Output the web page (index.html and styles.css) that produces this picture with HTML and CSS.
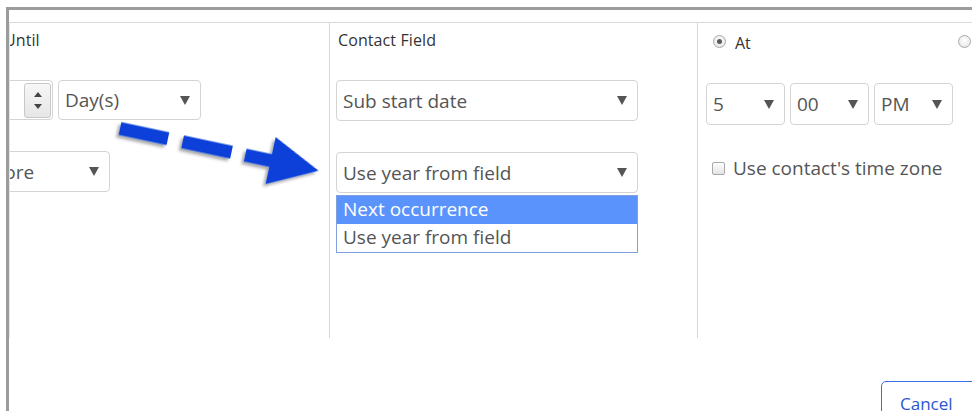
FILE: index.html
```html
<!DOCTYPE html>
<html lang="en">
<head>
<meta charset="utf-8">
<title>Timer step</title>
<link rel="stylesheet" href="styles.css">
</head>
<body>
<div class="frame">
  <div class="panel">
    <div class="cols">
      <section class="col col-until">
        <div class="label label-until">Until</div>
        <div class="row row-first">
          <div class="num-input">
            <span class="num-value">1</span>
            <span class="spinner"><span class="tri-up"></span><span class="tri-down"></span></span>
          </div>
          <div class="select select-unit"><span class="select-text">Day(s)</span><span class="caret"></span></div>
        </div>
        <div class="row row-second">
          <div class="select select-when"><span class="select-text">Before</span><span class="caret"></span></div>
        </div>
      </section>

      <section class="col col-field">
        <div class="label">Contact Field</div>
        <div class="row row-first">
          <div class="select select-wide"><span class="select-text">Sub start date</span><span class="caret"></span></div>
        </div>
        <div class="row row-second dropdown-host">
          <div class="select select-wide"><span class="select-text">Use year from field</span><span class="caret"></span></div>
          <ul class="menu">
            <li class="menu-item is-active">Next occurrence</li>
            <li class="menu-item">Use year from field</li>
          </ul>
        </div>
      </section>

      <section class="col col-time">
        <div class="radio-row">
          <label class="radio-opt"><span class="radio checked"></span><span class="radio-label">At</span></label>
          <span class="radio radio-far"></span>
        </div>
        <div class="time-row">
          <div class="select select-time"><span class="select-text">5</span><span class="caret"></span></div>
          <div class="select select-time"><span class="select-text">00</span><span class="caret"></span></div>
          <div class="select select-time"><span class="select-text">PM</span><span class="caret"></span></div>
        </div>
        <label class="check-row"><span class="checkbox"></span><span class="check-label">Use contact's time zone</span></label>
      </section>
    </div>
    <div class="footer">
      <button class="btn-cancel" type="button">Cancel</button>
    </div>
  </div>
</div>

<svg class="callout" width="972" height="411" viewBox="0 0 972 411" aria-hidden="true">
  <defs>
    <filter id="soft-shadow" x="-20%" y="-20%" width="140%" height="160%">
      <feDropShadow dx="-2" dy="3" stdDeviation="1.8" flood-color="#000" flood-opacity="0.35"/>
    </filter>
  </defs>
  <g transform="translate(120 128.5) rotate(12)" fill="#0840d8" filter="url(#soft-shadow)">
    <rect x="0" y="-6.5" width="49" height="13"/>
    <rect x="64" y="-6.5" width="50" height="13"/>
    <rect x="128" y="-6.5" width="30" height="13"/>
    <polygon points="154,-24 203,0 154,24"/>
  </g>
</svg>
</body>
</html>
```

FILE: styles.css
```css
html, body {
  margin: 0;
  padding: 0;
  height: 100%;
  overflow: hidden;
  background: #ffffff;
}

body {
  position: relative;
  font-family: "Open Sans", "Liberation Sans", sans-serif;
  color: #555;
}

/* outer window edge */
.frame {
  margin: 7px 0 0 6px;
  border-top: 3px solid #9c9c9c;
  border-left: 3px solid #9c9c9c;
  height: 420px;
}

.panel {
  padding-top: 12px;
}

.cols {
  display: flex;
  border-top: 1px solid #d9d9d9;
  border-left: 1px solid #e6e6e6;
  height: 315px;
}

.col {
  box-sizing: border-box;
  padding-top: 6px;
}

.col-until {
  width: 320px;
  border-right: 1px solid #d6d6d6;
  overflow: hidden;
}

.col-field {
  width: 368px;
  border-right: 1px solid #d6d6d6;
  padding-left: 6px;
}

.col-time {
  flex: 1;
  padding-left: 8px;
  overflow: hidden;
}

.label {
  font-size: 16px;
  line-height: 18px;
  height: 18px;
  color: #333;
  padding-left: 2px;
  margin-top: 2px;
  letter-spacing: 0.1px;
}

.label-until {
  margin-left: -6px;
  padding-left: 0;
}

.row {
  display: flex;
  gap: 5px;
}

.row-first {
  margin-top: 31px;
}

.row-second {
  margin-top: 31px;
}

/* select boxes */
.select {
  box-sizing: border-box;
  height: 41px;
  display: flex;
  align-items: center;
  justify-content: space-between;
  padding: 0 10px 0 6px;
  border: 1px solid #d4d4d4;
  border-radius: 4px;
  background: #fff;
  font-size: 19px;
  color: #555;
  white-space: nowrap;
}

.select-text {
  line-height: 20px;
}

.caret {
  width: 0;
  height: 0;
  border-left: 5px solid transparent;
  border-right: 5px solid transparent;
  border-top: 9px solid #555;
  flex: none;
}

.select-unit {
  width: 143px;
  height: 40px;
}

.select-when {
  width: 142px;
  margin-left: -42px;
}

.select-wide {
  width: 302px;
}

.num-input {
  box-sizing: border-box;
  width: 90px;
  height: 40px;
  margin-left: -47px;
  border: 1px solid #d4d4d4;
  border-radius: 4px;
  display: flex;
  align-items: center;
  justify-content: space-between;
  padding: 0 0 0 8px;
  font-size: 19px;
}

.num-value {
  color: #555;
}

.spinner {
  box-sizing: border-box;
  width: 27px;
  height: 35px;
  margin-right: 1px;
  border: 1px solid #c8c8c8;
  border-radius: 3px;
  background: linear-gradient(#f7f7f7, #e6e6e6);
  display: flex;
  flex-direction: column;
  align-items: center;
  justify-content: center;
  gap: 7px;
}

.tri-up, .tri-down {
  width: 0;
  height: 0;
  border-left: 4px solid transparent;
  border-right: 4px solid transparent;
}

.tri-up { border-bottom: 5px solid #444; }
.tri-down { border-top: 5px solid #444; }

/* open option list */
.dropdown-host {
  position: relative;
}

.menu {
  position: absolute;
  left: 0;
  top: 43px;
  width: 302px;
  box-sizing: border-box;
  margin: 0;
  padding: 0;
  list-style: none;
  border: 1px solid #7f9fdd;
  background: #fff;
  font-size: 19px;
}

.menu-item {
  height: 28px;
  line-height: 27px;
  padding-left: 6px;
  color: #555;
}

.menu-item.is-active {
  background: #5a93fc;
  color: #fff;
}

/* time column */
.radio-row {
  display: flex;
  align-items: center;
  justify-content: space-between;
  margin-top: 4px;
  padding-left: 7px;
  height: 16px;
}

.radio-opt {
  display: flex;
  align-items: center;
  gap: 9px;
}

.radio {
  box-sizing: border-box;
  width: 13px;
  height: 13px;
  border-radius: 50%;
  border: 1px solid #a9a9a9;
  background: radial-gradient(circle at 50% 40%, #ffffff, #e1e1e1);
  display: inline-block;
  position: relative;
}

.radio.checked::after {
  content: "";
  position: absolute;
  left: 3px;
  top: 3px;
  width: 5px;
  height: 5px;
  border-radius: 50%;
  background: #5a5a5a;
}

.radio-far {
  margin-right: 1px;
}

.radio-label {
  font-size: 16px;
  color: #333;
  line-height: 18px;
  padding-top: 3px;
}

.time-row {
  display: flex;
  gap: 5px;
  margin-top: 34px;
}

.select-time {
  width: 79px;
  height: 42px;
}

.check-row {
  display: flex;
  align-items: center;
  gap: 8px;
  margin-top: 33px;
  padding-left: 6px;
}

.checkbox {
  box-sizing: border-box;
  width: 13px;
  height: 13px;
  border: 1px solid #a9a9a9;
  border-radius: 2px;
  background: linear-gradient(#ffffff, #e3e3e3);
}

.check-label {
  font-size: 19px;
  color: #555;
  line-height: 20px;
}

/* footer */
.footer {
  display: flex;
  justify-content: flex-end;
  margin-top: 43px;
}

.btn-cancel {
  box-sizing: border-box;
  width: 112px;
  height: 46px;
  margin-right: -21px;
  border: 1px solid #3a6ee8;
  border-radius: 5px;
  background: #fff;
  font-family: "Open Sans", "Liberation Sans", sans-serif;
  font-size: 17px;
  color: #2a55cf;
  text-align: left;
  padding: 0 0 2px 18px;
  display: flex;
  align-items: center;
}

/* annotation arrow drawn over the form */
.callout {
  position: absolute;
  left: 0;
  top: 0;
  pointer-events: none;
}
```
